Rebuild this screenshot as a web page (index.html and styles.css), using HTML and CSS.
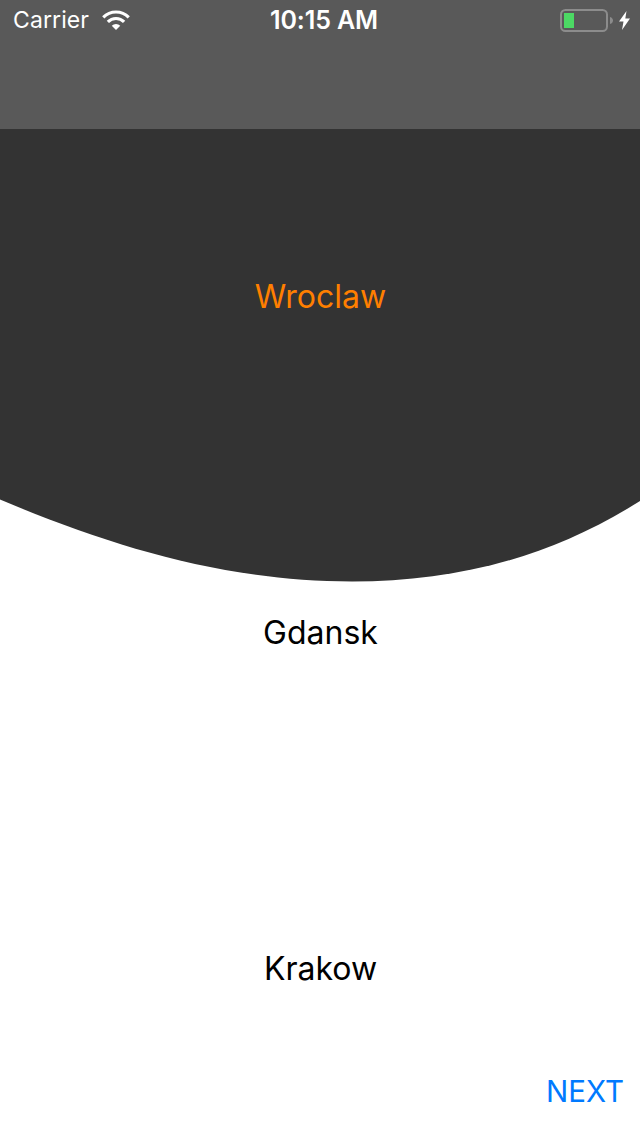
FILE: index.html
```html
<!DOCTYPE html>
<html lang="en">
<head>
<meta charset="utf-8">
<title>Cities</title>
<link rel="stylesheet" href="styles.css">
</head>
<body>
<div class="app">
  <svg class="wave" viewBox="0 0 640 1136" width="640" height="1136" aria-hidden="true">
    <path d="M0 129H640V501C550 558 455 581.500 352 581.500C225 581.500 110 546 0 499.500Z" fill="#333333"/>
  </svg>
  <header class="nav">
    <div class="status">
      <div class="status-left">
        <span class="carrier">Carrier</span>
        <svg class="wifi" viewBox="0 0 28 20" width="28" height="20" aria-hidden="true">
          <path d="M1.270 7.270A18 18 0 0 1 26.730 7.270" fill="none" stroke="#fff" stroke-width="3.200"/>
          <path d="M5.870 11.870A11.500 11.500 0 0 1 22.130 11.870" fill="none" stroke="#fff" stroke-width="3.200"/>
          <path d="M14 20L9.760 15.760A6 6 0 0 1 18.240 15.760Z" fill="#fff"/>
        </svg>
      </div>
      <span class="clock">10:15 AM</span>
      <div class="status-right">
        <svg class="battery" viewBox="0 0 53 24" width="53" height="24" aria-hidden="true">
          <rect x="1" y="1" width="46" height="21" rx="4.500" fill="none" stroke="#8c8c8c" stroke-width="2"/>
          <rect x="4" y="4" width="10" height="15" fill="#4cd964"/>
          <path d="M50 8C52 8.500 53 10 53 11.500C53 13 52 14.500 50 15Z" fill="#8c8c8c"/>
        </svg>
        <svg class="bolt" viewBox="0 0 11 19" width="11" height="19" aria-hidden="true">
          <path d="M7.500 0L0 10.500H4.500L3 19L11 7.500H6.300Z" fill="#fff"/>
        </svg>
      </div>
    </div>
  </header>
  <main class="cities">
    <div class="city city-active">Wroclaw</div>
    <div class="city">Gdansk</div>
    <div class="city">Krakow</div>
  </main>
  <a class="next">NEXT</a>
</div>
</body>
</html>
```

FILE: styles.css
```css
* { box-sizing: border-box; }
html, body { margin: 0; padding: 0; background: #fff; }
.app {
  position: relative;
  width: 640px;
  height: 1136px;
  overflow: hidden;
  display: flex;
  flex-direction: column;
  font-family: Inter, "Liberation Sans", sans-serif;
}
.wave { position: absolute; left: 0; top: 0; }
.nav {
  position: relative;
  height: 129px;
  flex: none;
  background: #595959;
}
.status {
  height: 40px;
  padding: 0 10px 0 13px;
  display: grid;
  grid-template-columns: 1fr auto 1fr;
  align-items: center;
  color: #fff;
}
.status-left { display: flex; align-items: center; gap: 13px; }
.carrier { font-size: 23px; letter-spacing: 0.1px; }
.clock { font-size: 25px; font-weight: 600; letter-spacing: -0.1px; margin-left: 5px; }
.status-right { display: flex; justify-content: flex-end; align-items: center; gap: 6px; }
.battery { margin-top: 1px; }
.bolt { margin-top: 1px; }
.cities {
  position: relative;
  flex: 1;
  margin-top: -1px;
  display: grid;
  grid-template-rows: repeat(3, 1fr);
}
.city {
  display: flex;
  align-items: center;
  justify-content: center;
  padding-left: 1px;
  font-size: 32px;
  color: #000;
}
.city-active { color: #ff7f00; }
.next {
  position: absolute;
  right: 16px;
  bottom: 27px;
  font-size: 29.500px;
  color: #007aff;
}
```
